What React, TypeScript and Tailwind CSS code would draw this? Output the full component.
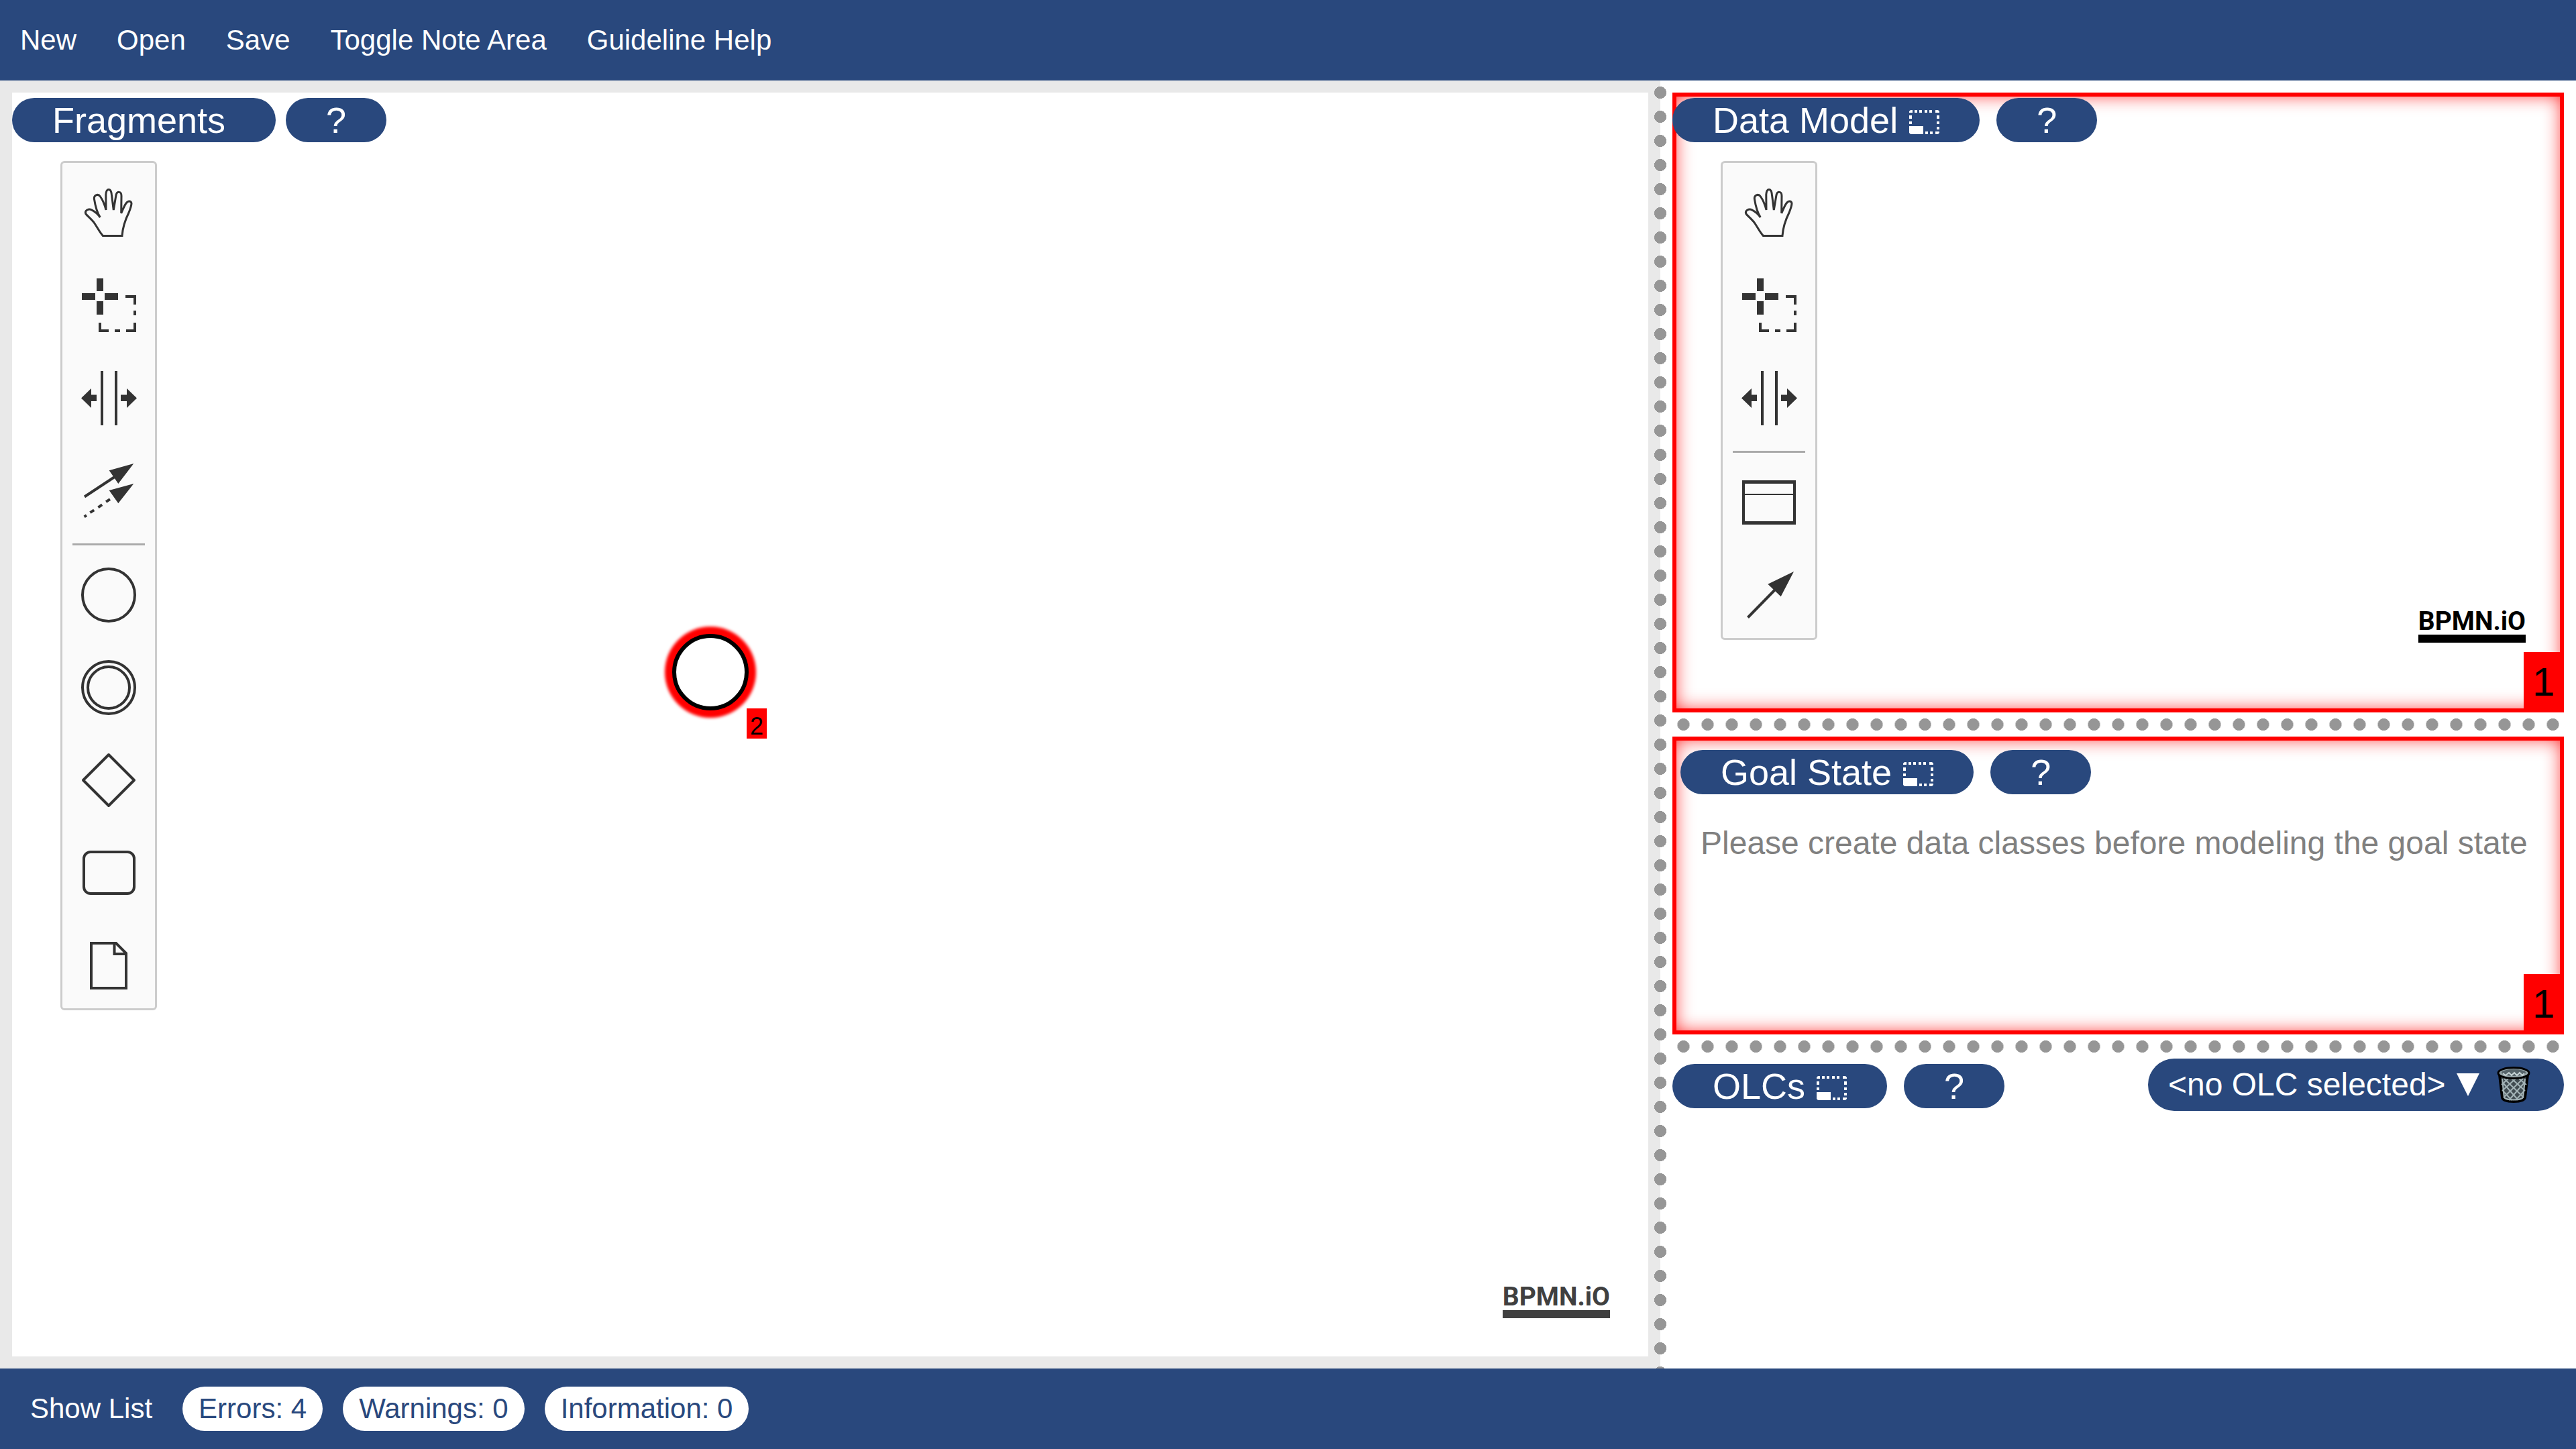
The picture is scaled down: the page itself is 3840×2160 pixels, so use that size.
import type { ReactNode } from "react";

const menuItems = ["New", "Open", "Save", "Toggle Note Area", "Guideline Help"];
const counters = ["Errors: 4", "Warnings: 0", "Information: 0"];

function HandIcon() {
  return (
    <path
      d="M60.3 108.4H89C90 95 95 82 99 74C101 69 103 64 103 60C102 56 98 56 95 60C92 64 90 70 87.7 74.8L88 49C88 42 81 41 79.8 49L76.3 70L73.4 47C72.5 37 65.5 37 64.8 47L65 70C63 62 60 55 56.5 50C53 45 46.5 48 47.5 54C49 64 52 74 56.3 81.1C53 76 48 72 43.5 69.8C39 67.5 33 71 34.7 75.5C36 78 44 84 48 90C52 96 56 104 60.3 108.4Z"
      fill="none"
      stroke="#333"
      strokeWidth="3"
    />
  );
}

function LassoIcon() {
  return (
    <path
      fill="#333"
      d="M51 34h10v19H51zM51 68h10v20H51zM29 56h20v10H29zM63 56h20v10H63zM94 59h16v14h-4V63H94zM106 82h4v7h-4zM106 100h4v14H95v-4h11zM78 110h8v4h-8zM54 100h4v10h11v4H54z"
    />
  );
}

function SpaceIcon() {
  return (
    <path
      fill="#333"
      d="M57 34h4v81h-4zM78 34h4v81h-4zM28 74.5L43 60v9.5h8v9.5h-8v10zM111 74.5L96 60v9.5h-9v9.5h9v10z"
    />
  );
}

function ConnectIcon() {
  return (
    <g fill="#333" stroke="#333">
      <path d="M33 83.5L80 52.5" strokeWidth="4" />
      <path d="M106.3 34L69.7 44.3L83.3 64zM106.3 64L69.7 74L83.3 93.3z" stroke="none" />
      <path
        d="M32.6 113.4L36 111.2M41.4 107.2L47.2 103.3M53.4 99.3L59.2 95.4M65.1 91.2L71 87.2"
        strokeWidth="4"
      />
    </g>
  );
}

function StartEventIcon() {
  return <circle cx="69" cy="74" r="39" fill="none" stroke="#333" strokeWidth="4" />;
}

function IntermediateEventIcon() {
  return (
    <g fill="none" stroke="#333" strokeWidth="4">
      <circle cx="69" cy="74" r="39" />
      <circle cx="69" cy="74" r="31" />
    </g>
  );
}

function GatewayIcon() {
  return (
    <path
      d="M69 36L107 74L69 112L31 74Z"
      fill="none"
      stroke="#333"
      strokeWidth="4"
      strokeLinejoin="round"
    />
  );
}

function TaskIcon() {
  return (
    <rect x="32" y="43" width="75" height="62" rx="10" fill="none" stroke="#333" strokeWidth="4" />
  );
}

function DataObjectIcon() {
  return (
    <g fill="none" stroke="#333" strokeWidth="4">
      <path d="M43 41H80L95 56V108H43Z" />
      <path d="M77.5 41V57H95" />
    </g>
  );
}

function DataClassIcon() {
  return (
    <path
      fillRule="evenodd"
      fill="#333"
      d="M29 41h80v66H29zM33 46v15h72V46zM33 63v39h72V63z"
    />
  );
}

function AssociationIcon() {
  return (
    <g fill="#333">
      <path d="M37.5 107.5L79 65" stroke="#333" strokeWidth="4" />
      <path d="M106 39L67.3 57.7L86.7 76.3z" />
    </g>
  );
}

type Tool = { label: string; icon: ReactNode };

const fragmentTools: Tool[][] = [
  [
    { label: "Activate the hand tool", icon: <HandIcon /> },
    { label: "Activate the lasso tool", icon: <LassoIcon /> },
    { label: "Activate the create/remove space tool", icon: <SpaceIcon /> },
    { label: "Activate the global connect tool", icon: <ConnectIcon /> },
  ],
  [
    { label: "Create StartEvent", icon: <StartEventIcon /> },
    { label: "Create Intermediate/Boundary Event", icon: <IntermediateEventIcon /> },
    { label: "Create Gateway", icon: <GatewayIcon /> },
    { label: "Create Task", icon: <TaskIcon /> },
    { label: "Create DataObjectReference", icon: <DataObjectIcon /> },
  ],
];

const dataTools: Tool[][] = [
  [
    { label: "Activate the hand tool", icon: <HandIcon /> },
    { label: "Activate the lasso tool", icon: <LassoIcon /> },
    { label: "Activate the create/remove space tool", icon: <SpaceIcon /> },
  ],
  [
    { label: "Create data class", icon: <DataClassIcon /> },
    { label: "Create association", icon: <AssociationIcon /> },
  ],
];

function Palette({ groups }: { groups: Tool[][] }) {
  return (
    <div className="ml-[72px] mt-7 flex w-36 flex-col rounded-md border-3 border-[#ccc] bg-[#fafafa]">
      {groups.map((tools, index) => (
        <div key={index} className="flex flex-col">
          {index > 0 && <hr className="mx-[15px] mt-[15px] border-t-3 border-[#aaa]" />}
          {tools.map((tool) => (
            <button key={tool.label} type="button" aria-label={tool.label} className="size-[138px]">
              <svg viewBox="0 0 138 138" className="size-full">
                {tool.icon}
              </svg>
            </button>
          ))}
        </div>
      ))}
    </div>
  );
}

function MinimizeIcon() {
  return (
    <svg viewBox="0 0 45 36" className="mt-1.5 h-9 w-[45px]" fill="#fff" aria-hidden="true">
      <path d="M2 0h3v4H0V2zM8 0h4v4H8zM15 0h4v4h-4zM23 0h4v4h-4zM30 0h4v4h-4zM39 0h4l2 2v2h-6zM0 8h4v5H0zM0 17h4v4H0zM41 8h4v5h-4zM41 17h4v4h-4zM41 25h4v4h-4zM0 24h21v12H2l-2-2zM24 32h4v4h-4zM31 32h4v4h-4zM39 32h6v2l-2 2h-4z" />
    </svg>
  );
}

function Heading({ title, minimizable = true }: { title: string; minimizable?: boolean }) {
  return (
    <div className={minimizable ? "flex gap-[25px]" : "flex gap-[15px]"}>
      <h2
        className={
          minimizable
            ? "flex h-[66px] items-center gap-[17px] whitespace-nowrap rounded-full bg-[#29487d] px-[60px] text-[54px] leading-none text-white"
            : "flex h-[66px] items-center whitespace-nowrap rounded-full bg-[#29487d] pl-[60px] pr-[75px] text-[54px] leading-none text-white"
        }
      >
        {title}
        {minimizable && (
          <button type="button" aria-label={`Minimize ${title}`}>
            <MinimizeIcon />
          </button>
        )}
      </h2>
      <button
        type="button"
        className="h-[66px] w-[150px] rounded-full bg-[#29487d] text-[54px] leading-none text-white"
      >
        ?
      </button>
    </div>
  );
}

function Logo({ tone }: { tone: string }) {
  return (
    <a href="#bpmn-io" className={`flex flex-col ${tone}`}>
      <span className="font-[Roboto,sans-serif] text-[39px] font-bold leading-[39px]">BPMN.iO</span>
      <span className="h-3 w-full bg-current" />
    </a>
  );
}

function ErrorCount() {
  return (
    <span className="absolute bottom-0 right-0 flex h-[90px] w-[60px] items-center justify-center bg-[#f00] text-[60px] leading-none text-black">
      1
    </span>
  );
}

function HorizontalDivider() {
  return (
    <div className="bg-[radial-gradient(circle,#969696_9px,transparent_9px)] bg-size-[36px_36px] bg-center" />
  );
}

function TrashIcon() {
  return (
    <svg viewBox="0 0 50 54" className="h-[54px] w-[50px]" aria-hidden="true">
      <path
        d="M4 12L8 46Q9 52 25 52Q41 52 42 46L46 12Z"
        fill="#414c51"
        stroke="#000"
        strokeWidth="4"
      />
      <path
        d="M9 24L32 50M9 36L22 50M11 18L40 46M22 18L42 36M33 18L44 27M41 24L18 50M41 36L28 50M39 18L10 46M28 18L8 36M17 18L7 27"
        stroke="#a3b3b6"
        strokeWidth="2"
      />
      <path
        d="M8 18L11 46Q14 49.5 25 49.5Q36 49.5 39 46L42 18"
        fill="none"
        stroke="#a3b3b6"
        strokeWidth="2"
      />
      <ellipse cx="25" cy="9.5" rx="23" ry="8" fill="#96a5a9" stroke="#000" strokeWidth="3" />
      <ellipse cx="25" cy="9" rx="18" ry="5" fill="#56646a" />
      <path d="M9 10l4 3 5-4 4 4 4-4 4 4 4-4 4 4 3-3" fill="none" stroke="#c3d0d2" strokeWidth="2" />
    </svg>
  );
}

export default function App() {
  return (
    <div className="flex h-screen flex-col bg-white font-['Liberation_Sans',Arial,sans-serif] text-black">
      <nav className="flex h-[120px] shrink-0 items-center bg-[#29487d]">
        {menuItems.map((item) => (
          <button key={item} type="button" className="px-[30px] text-[42px] leading-12 text-white">
            {item}
          </button>
        ))}
      </nav>

      <main className="grid min-h-0 flex-1 grid-cols-[minmax(0,2457fr)_36px_minmax(0,1347fr)]">
        <section className="flex bg-[#e9e9e9] py-[18px] pl-[18px]">
          <div className="relative flex flex-1 flex-col bg-white pt-2">
            <Heading title="Fragments" minimizable={false} />
            <Palette groups={fragmentTools} />
            <svg viewBox="0 0 160 160" className="absolute left-[961px] top-[784px] size-40">
              <defs>
                <filter id="glow">
                  <feGaussianBlur stdDeviation="2" />
                </filter>
              </defs>
              <circle cx="80" cy="80" r="68" fill="#f00" filter="url(#glow)" />
              <circle cx="80" cy="80" r="54" fill="#fff" stroke="#000" strokeWidth="6" />
            </svg>
            <span className="absolute left-[1095px] top-[918px] flex h-[45px] w-[30px] items-end justify-center bg-[#f00] text-4xl leading-none">
              2
            </span>
            <div className="absolute bottom-[57px] right-[57px]">
              <Logo tone="text-[#404040]" />
            </div>
          </div>
        </section>

        <div className="bg-[radial-gradient(circle,#969696_9px,transparent_9px),linear-gradient(90deg,#e9e9e9_50%,#fff_50%)] bg-size-[36px_36px]" />

        <div className="grid grid-rows-[minmax(0,924fr)_36px_minmax(0,444fr)_36px_minmax(0,462fr)] pr-[18px] pt-[18px]">
          <section className="relative pt-2 shadow-[inset_0_0_0_6px_#f00,inset_0_0_30px_#f00]">
            <Heading title="Data Model" />
            <Palette groups={dataTools} />
            <div className="absolute bottom-[104px] right-[57px]">
              <Logo tone="text-black" />
            </div>
            <ErrorCount />
          </section>
          <HorizontalDivider />
          <section className="relative pl-3 pt-5 shadow-[inset_0_0_0_6px_#f00,inset_0_0_30px_#f00]">
            <Heading title="Goal State" />
            <p className="ml-[30px] mt-[45px] whitespace-nowrap text-5xl leading-14 text-[#808080]">
              Please create data classes before modeling the goal state
            </p>
            <ErrorCount />
          </section>
          <HorizontalDivider />
          <section className="flex items-start justify-between">
            <div className="pt-2">
              <Heading title="OLCs" />
            </div>
            <div className="flex h-[78px] items-center rounded-full bg-[#29487d] pl-[30px] pr-[50px] text-5xl text-white">
              <select
                aria-label="Object lifecycle"
                className="appearance-none bg-transparent leading-14 outline-none"
              >
                <option>&lt;no OLC selected&gt;</option>
              </select>
              <svg viewBox="0 0 34 34" className="ml-4 size-[34px]" aria-hidden="true">
                <path d="M0 0H34L17 34Z" fill="#fff" />
              </svg>
              <button type="button" aria-label="Delete OLC" className="ml-[26px]">
                <TrashIcon />
              </button>
            </div>
          </section>
        </div>
      </main>

      <footer className="flex h-[120px] shrink-0 items-center gap-[30px] bg-[#29487d] px-[45px] text-[42px] leading-12">
        <button type="button" className="mr-[15px] text-white">
          Show List
        </button>
        {counters.map((counter) => (
          <button
            key={counter}
            type="button"
            className="h-[66px] rounded-full bg-white px-6 text-[#29487d]"
          >
            {counter}
          </button>
        ))}
      </footer>
    </div>
  );
}
